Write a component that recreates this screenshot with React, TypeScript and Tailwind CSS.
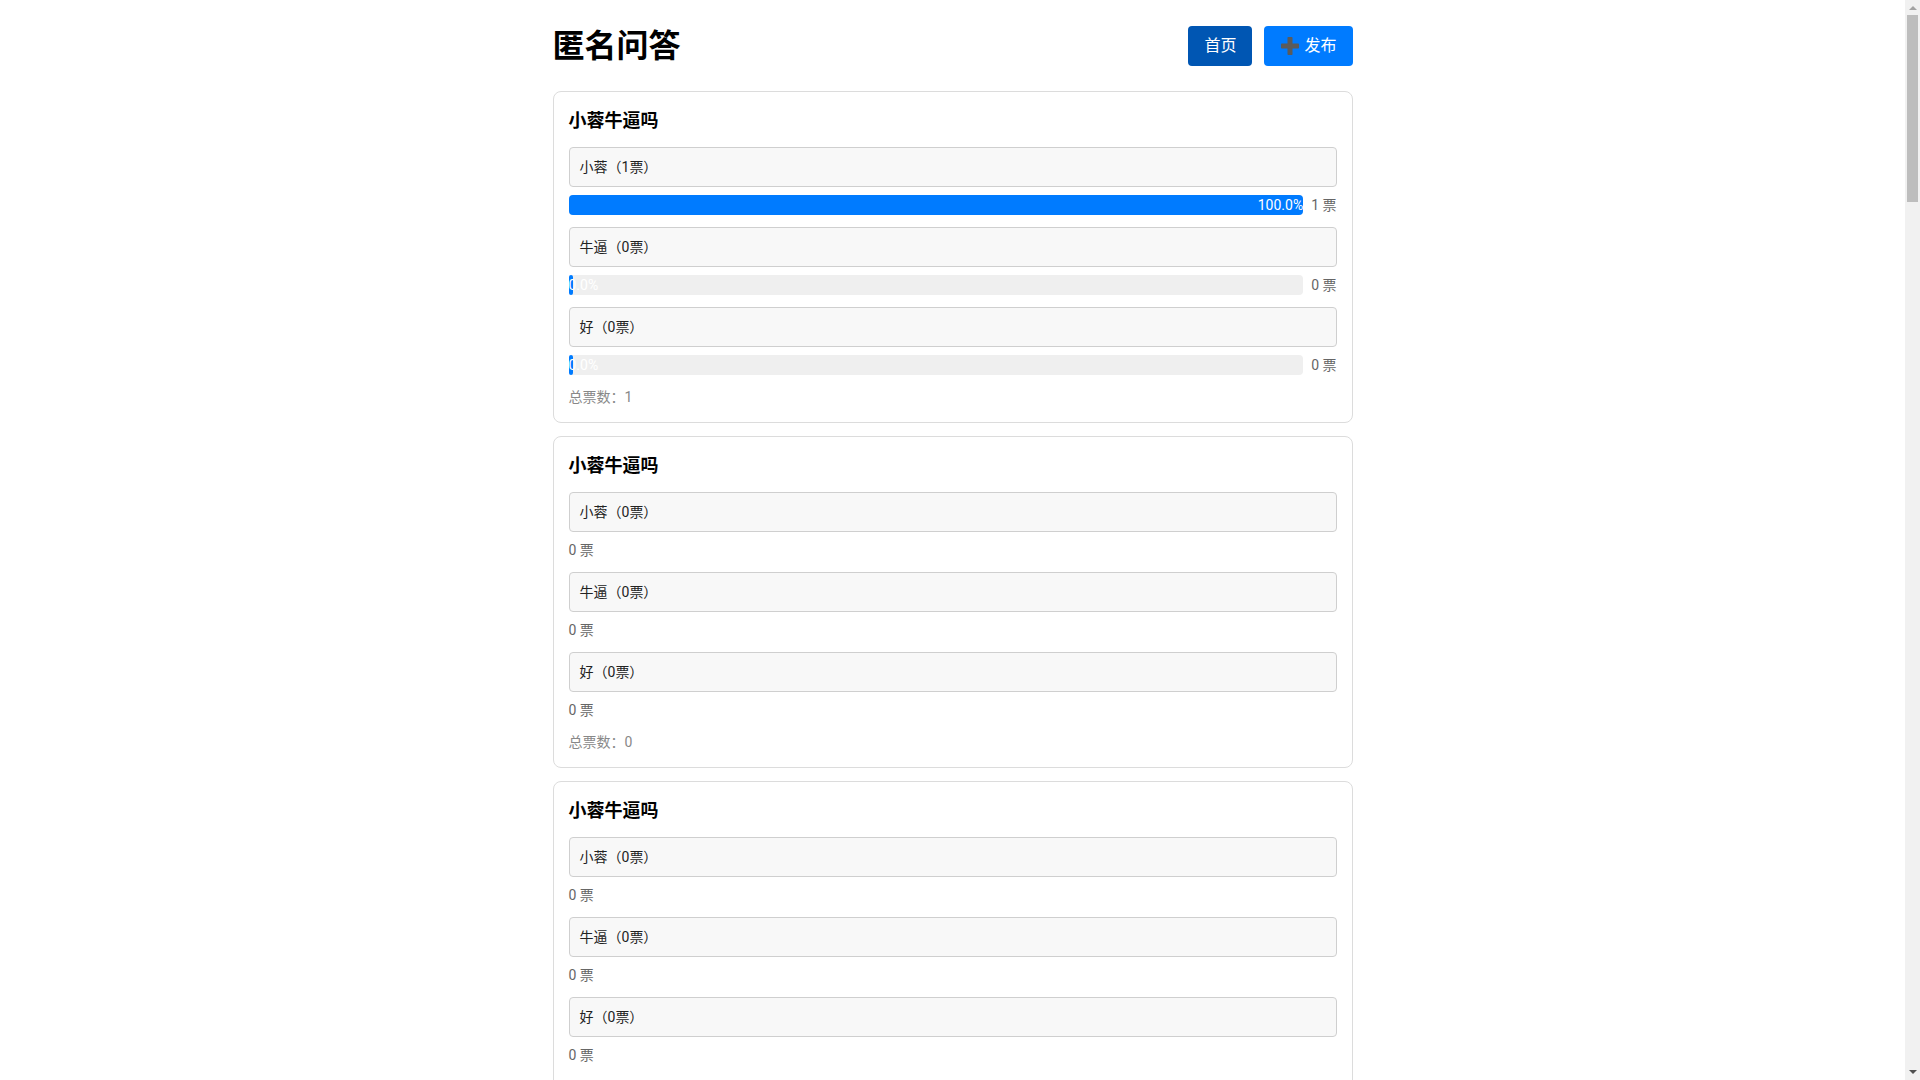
import React from "react";

type Option = { label: string; votes: number };
type Poll = { id: number; question: string; options: Option[]; showBars: boolean };

const base: Option[] = [
  { label: "小蓉", votes: 0 },
  { label: "牛逼", votes: 0 },
  { label: "好", votes: 0 },
];

const polls: Poll[] = Array.from({ length: 17 }, (_, i) => ({
  id: i,
  question: "小蓉牛逼吗",
  options: base.map((o, j) => ({ ...o, votes: i === 0 && j === 0 ? 1 : 0 })),
  showBars: i === 0,
}));

function PlusGlyph() {
  return (
    <svg width="20" height="20" viewBox="0 0 20 20" className="inline-block">
      <rect x="7.5" y="1" width="5" height="18" rx="0.8" fill="#5b5b5b" />
      <rect x="1" y="7.5" width="18" height="5" rx="0.8" fill="#5b5b5b" />
    </svg>
  );
}

function PollCard({ poll }: { poll: Poll }) {
  const total = poll.options.reduce((s, o) => s + o.votes, 0);
  return (
    <div className="mb-[13px] rounded-lg border border-[#dcdcdc] bg-white p-[15px]">
      <h3 className="mb-3 text-[18px] font-bold leading-7 text-black">{poll.question}</h3>
      {poll.options.map((o) => {
        const pct = total > 0 ? (o.votes / total) * 100 : 0;
        return (
          <div key={o.label}>
            <div className="mb-2 flex h-10 items-center rounded border border-[#cfcfcf] bg-[#f8f8f8] px-[10px] text-[14px] text-[#222]">
              {o.label}（{o.votes}票）
            </div>
            <div className="mb-3 flex h-5 items-center gap-2">
              {poll.showBars && (
                <div className="h-5 flex-1 overflow-visible rounded bg-[#efefef]">
                  <div
                    className="h-5 min-w-[4px] whitespace-nowrap rounded bg-[#007bff] text-right text-[14px] leading-5 text-white"
                    style={{ width: `${pct}%` }}
                  >
                    {pct.toFixed(1)}%
                  </div>
                </div>
              )}
              <span className="text-[14px] leading-5 text-[#666]">{o.votes} 票</span>
            </div>
          </div>
        );
      })}
      <div className="text-[14px] leading-5 text-[#888]">总票数：{total}</div>
    </div>
  );
}

// Classic page scrollbar: arrow buttons, track and thumb.
function ScrollRail() {
  return (
    <aside className="flex h-screen w-[15px] shrink-0 flex-col bg-[#f1f1f1]">
      <div className="flex h-[15px] items-center justify-center">
        <svg width="8" height="5" viewBox="0 0 8 5">
          <path d="M0 5 L4 1 L8 5 Z" fill="#a3a3a3" />
        </svg>
      </div>
      <div className="mx-[2px] h-[187px] bg-[#bdbdbd]" />
      <div className="flex-1" />
      <div className="flex h-[15px] items-center justify-center">
        <svg width="8" height="5" viewBox="0 0 8 5">
          <path d="M0 0 L8 0 L4 4 Z" fill="#505050" />
        </svg>
      </div>
    </aside>
  );
}

export default function App() {
  return (
    <div
      className="flex h-screen bg-white"
      style={{ fontFamily: 'Roboto, "Noto Sans CJK SC", sans-serif' }}
    >
      <main className="h-screen flex-1 overflow-y-auto [scrollbar-width:none]">
        <div className="mx-auto max-w-[800px] pb-5">
          <header className="mb-[19px] box-content flex h-[52px] items-center justify-between pt-5">
            <h1 className="text-[32px] font-bold leading-[48px] text-black">匿名问答</h1>
            <nav className="flex items-center gap-3">
              <button className="h-10 rounded bg-[#0056b3] px-4 text-[16px] leading-6 text-white">首页</button>
              <button className="flex h-10 items-center gap-1 rounded bg-[#007bff] px-4 text-[16px] leading-6 text-white">
                <PlusGlyph />
                <span>发布</span>
              </button>
            </nav>
          </header>
          {polls.map((p) => (
            <PollCard key={p.id} poll={p} />
          ))}
        </div>
      </main>
      <ScrollRail />
    </div>
  );
}
